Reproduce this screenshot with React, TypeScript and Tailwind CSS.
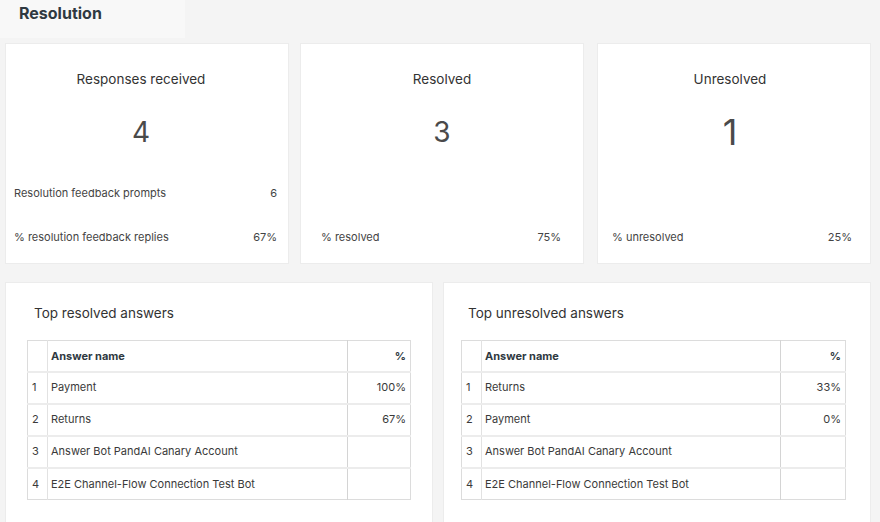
const font = { fontFamily: 'Inter, "Noto Sans", sans-serif' }

type Row = { name: string; pct: string }

const resolvedRows: Row[] = [
  { name: 'Payment', pct: '100%' },
  { name: 'Returns', pct: '67%' },
  { name: 'Answer Bot PandAI Canary Account', pct: '' },
  { name: 'E2E Channel-Flow Connection Test Bot', pct: '' },
]

const unresolvedRows: Row[] = [
  { name: 'Returns', pct: '33%' },
  { name: 'Payment', pct: '0%' },
  { name: 'Answer Bot PandAI Canary Account', pct: '' },
  { name: 'E2E Channel-Flow Connection Test Bot', pct: '' },
]

function AnswerTable({ rows, nameWidth }: { rows: Row[]; nameWidth: string }) {
  return (
    <table className="w-full border-collapse border border-[#dcdcdc] text-[11px] text-[#3a3a3a]">
      <thead>
        <tr className="h-[31px] border-b-2 border-[#ececec]">
          <th className="w-[20px] border-r border-[#e2e2e2]"></th>
          <th className={`${nameWidth} border-r border-[#d4d4d4] pl-[3px] text-left font-bold text-[#2f3941]`}>Answer name</th>
          <th className="pr-[4px] text-right font-bold text-[#2f3941]">%</th>
        </tr>
      </thead>
      <tbody>
        {rows.map((r, i) => (
          <tr key={i} className={`h-[32px] ${i < rows.length - 1 ? 'border-b-2 border-[#ececec]' : ''}`}>
            <td className="border-r border-[#e2e2e2] pl-[4px]">{i + 1}</td>
            <td className="border-r border-[#d4d4d4] pl-[3px]">{r.name}</td>
            <td className="pr-[4px] text-right">{r.pct}</td>
          </tr>
        ))}
      </tbody>
    </table>
  )
}

export default function App() {
  return (
    <div className="w-[880px] h-[522px] overflow-hidden bg-[#f4f4f4]" style={font}>
      {/* Tab header */}
      <div className="h-[43px]">
        <div className="w-[185px] h-[38px] bg-[#f8f8f8] pl-[19px] pt-[3px]">
          <h1 className="text-[16px] leading-[20px] font-bold text-[#2f3941]">Resolution</h1>
        </div>
      </div>

      {/* Stat cards */}
      <div className="flex pl-[5px]">
        <div className="w-[284px] h-[221px] bg-white border border-[#ececec] flex flex-col">
          <div className="pt-[25px] pr-[12px] text-center text-[13.5px] leading-[20px] text-[#333]">Responses received</div>
          <div className="mt-[26px] pr-[12px] text-center text-[28px] leading-[34px] text-[#4a4a4a]">4</div>
          <div className="mt-auto pb-[18px] pl-[8px] pr-[11px] text-[11px] leading-[16px] text-[#444]">
            <div className="flex justify-between">
              <span>Resolution feedback prompts</span>
              <span>6</span>
            </div>
            <div className="flex justify-between mt-[28px]">
              <span>% resolution feedback replies</span>
              <span>67%</span>
            </div>
          </div>
        </div>

        <div className="ml-[11px] w-[284px] h-[221px] bg-white border border-[#ececec] flex flex-col">
          <div className="pt-[25px] text-center text-[13.5px] leading-[20px] text-[#333]">Resolved</div>
          <div className="mt-[26px] text-center text-[28px] leading-[34px] text-[#4a4a4a]">3</div>
          <div className="mt-auto pb-[18px] pl-[20px] pr-[22px] text-[11px] leading-[16px] text-[#444]">
            <div className="flex justify-between">
              <span>% resolved</span>
              <span>75%</span>
            </div>
          </div>
        </div>

        <div className="ml-[13px] w-[274px] h-[221px] bg-white border border-[#ececec] flex flex-col">
          <div className="pt-[25px] pr-[8px] text-center text-[13.5px] leading-[20px] text-[#333]">Unresolved</div>
          <div className="mt-[21px] pr-[8px] text-center text-[36px] leading-[44px] text-[#4a4a4a]">1</div>
          <div className="mt-auto pb-[18px] pl-[14px] pr-[18px] text-[11px] leading-[16px] text-[#444]">
            <div className="flex justify-between">
              <span>% unresolved</span>
              <span>25%</span>
            </div>
          </div>
        </div>
      </div>

      {/* Top answers */}
      <div className="flex pl-[5px] mt-[18px]">
        <div className="w-[428px] h-[260px] bg-white border border-[#ececec] pl-[21px] pr-[21px]">
          <div className="pt-[20px] pl-[7px] text-[13.5px] leading-[20px] text-[#333]">Top resolved answers</div>
          <div className="mt-[17px]">
            <AnswerTable rows={resolvedRows} nameWidth="w-[300px]" />
          </div>
        </div>

        <div className="ml-[10px] w-[428px] h-[260px] bg-white border border-[#ececec] pl-[17px] pr-[24px]">
          <div className="pt-[20px] pl-[7px] text-[13.5px] leading-[20px] text-[#333]">Top unresolved answers</div>
          <div className="mt-[17px]">
            <AnswerTable rows={unresolvedRows} nameWidth="w-[299px]" />
          </div>
        </div>
      </div>
    </div>
  )
}
